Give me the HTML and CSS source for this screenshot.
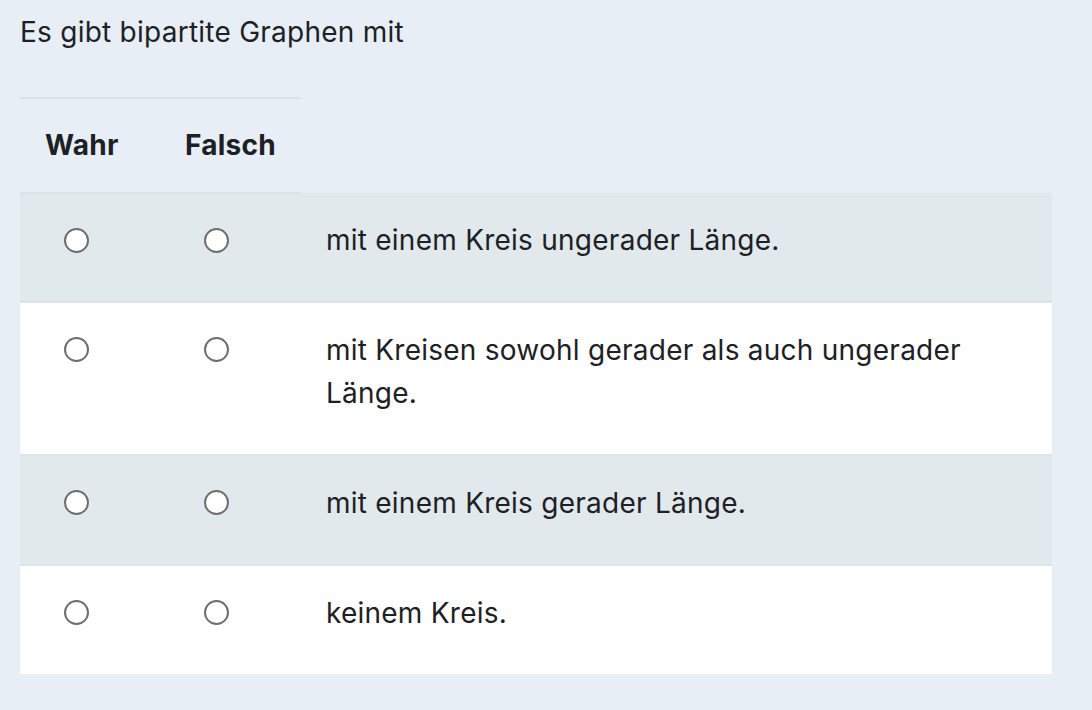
FILE: index.html
```html
<!DOCTYPE html>
<html lang="de">
<head>
<meta charset="utf-8">
<title>Frage</title>
<link rel="stylesheet" href="styles.css">
</head>
<body>
<div class="question">
  <p class="qtext">Es gibt bipartite Graphen mit</p>
  <table class="answers">
    <thead>
      <tr>
        <th class="opt">Wahr</th>
        <th class="opt">Falsch</th>
        <th class="blank"></th>
      </tr>
    </thead>
    <tbody>
      <tr class="odd">
        <td class="rad"><input type="radio" name="r1"></td>
        <td class="rad"><input type="radio" name="r1"></td>
        <td class="txt">mit einem Kreis ungerader Länge.</td>
      </tr>
      <tr class="even">
        <td class="rad"><input type="radio" name="r2"></td>
        <td class="rad"><input type="radio" name="r2"></td>
        <td class="txt">mit Kreisen sowohl gerader als auch ungerader<br>Länge.</td>
      </tr>
      <tr class="odd">
        <td class="rad"><input type="radio" name="r3"></td>
        <td class="rad"><input type="radio" name="r3"></td>
        <td class="txt">mit einem Kreis gerader Länge.</td>
      </tr>
      <tr class="even">
        <td class="rad"><input type="radio" name="r4"></td>
        <td class="rad"><input type="radio" name="r4"></td>
        <td class="txt">keinem Kreis.</td>
      </tr>
    </tbody>
  </table>
</div>
</body>
</html>
```
FILE: styles.css
```css
html, body {
  margin: 0;
  padding: 0;
  background: #e7eef5;
}
body {
  font-family: Inter, "Liberation Sans", Arial, sans-serif;
  color: #1d2125;
  font-size: 28px;
  line-height: 39px;
  letter-spacing: 0.25px;
}
.question {
  padding: 13px 40px 0 20px;
}
.qtext {
  margin: 0 0 45px 0;
}
.answers {
  border-collapse: collapse;
  width: 1032px;
}
.answers th {
  text-align: left;
  font-weight: bold;
  padding: 27px 25px 27px;
}
.answers th.opt {
  width: 90px;
  border-top: 2px solid #dbe2e8;
  border-bottom: 2px solid #dbe2e8;
}
.answers th.blank {
  padding: 0;
}
.answers td {
  vertical-align: top;
  line-height: 43px;
  padding: 26px 25px 39px;
}
.answers tbody tr {
  border-top: 2px solid #dfe5e9;
}
.answers tbody tr:first-child {
  border-top: none;
}
.answers tr.odd td {
  background: #e1e9ed;
}
.answers tr.even td {
  background: #ffffff;
}
.answers td.rad {
  padding-left: 44px;
}
.answers input[type="radio"] {
  -webkit-appearance: none;
  appearance: none;
  display: block;
  width: 25px;
  height: 25px;
  margin: 8px 0 0 0;
  border: 2px solid #6e6e6e;
  border-radius: 50%;
  background: #ffffff;
  box-sizing: border-box;
}
```
